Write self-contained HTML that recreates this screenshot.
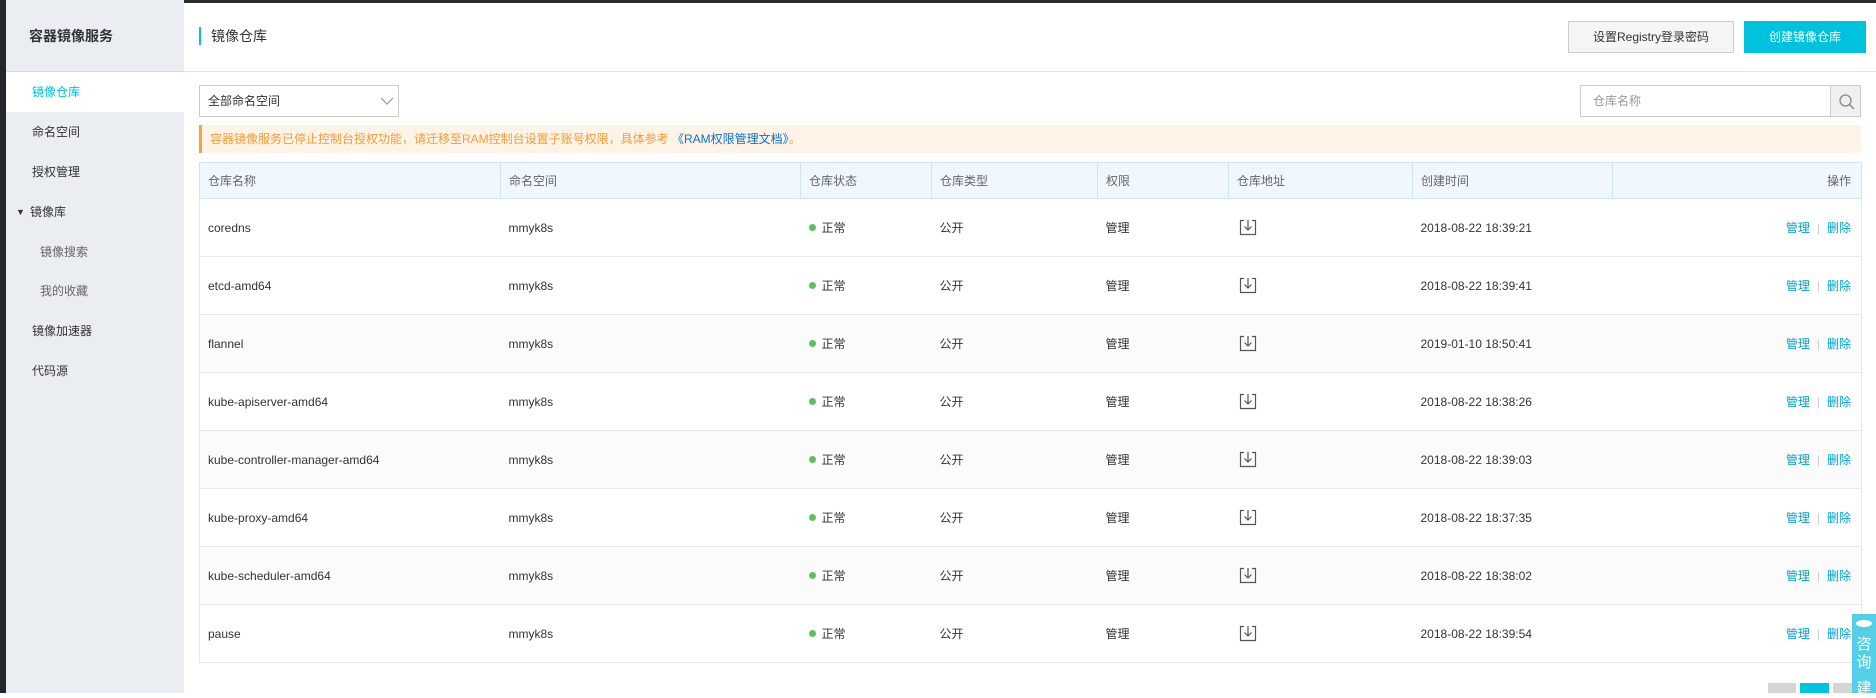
<!DOCTYPE html>
<html><head><meta charset="utf-8"><style>
*{margin:0;padding:0;box-sizing:border-box}
body{width:1876px;height:693px;overflow:hidden;background:#fff;font-family:"Liberation Sans","Noto Sans CJK SC",sans-serif;font-size:12px;color:#333;position:relative}
.a{position:absolute}
.side{left:0;top:0;width:184px;height:693px;background:#eaedf1}
.mi{position:absolute;left:6px;width:178px;height:40px;line-height:40px;padding-left:26px;color:#333}
table{border-collapse:collapse;position:absolute;left:199px;top:162px;width:1662px;table-layout:fixed}
th{height:36px;background:#f0f7fe;border:1px solid #cfe4fa;color:#666;font-weight:normal;text-align:left;padding-left:8px}
td{height:58px;border-bottom:1px solid #e8e8e8;padding-left:8px;white-space:nowrap}
tr.g td{background:#fbfbfb}
td:first-child{border-left:1px solid #e8e8e8}
td:last-child{border-right:1px solid #e8e8e8;text-align:right;padding-right:10px}
th:last-child{text-align:right;padding-right:10px}
.dot{display:inline-block;width:7px;height:7px;border-radius:50%;background:#5cc35c;margin-right:6px;vertical-align:1px}
.lk{color:#00a2ca}
.sep{color:#ccc;margin:0 7px}
</style></head><body>
<div class="a" style="left:0;top:0;width:1876px;height:3px;background:#2b2d30"></div>
<div class="a side"></div>
<div class="a" style="left:0;top:0;width:6px;height:693px;background:#23272b"></div>
<div class="a" style="left:29px;top:26px;font-size:14px;font-weight:bold;color:#333">容器镜像服务</div>
<div class="a" style="left:6px;top:71px;width:178px;height:1px;background:#d6dade"></div>
<div class="mi" style="top:72px;background:#fff;color:#00c1de">镜像仓库</div>
<div class="mi" style="top:112px">命名空间</div>
<div class="mi" style="top:152px">授权管理</div>
<div class="mi" style="top:192px;padding-left:24px"><span style="position:absolute;left:10px;font-size:9px">▼</span>镜像库</div>
<div class="mi" style="top:232px;padding-left:34px;color:#666">镜像搜索</div>
<div class="mi" style="top:271px;padding-left:34px;color:#666">我的收藏</div>
<div class="mi" style="top:311px">镜像加速器</div>
<div class="mi" style="top:351px">代码源</div>

<div class="a" style="left:199px;top:27px;width:2px;height:18px;background:#00c1de"></div>
<div class="a" style="left:211px;top:27px;font-size:14px;line-height:18px">镜像仓库</div>
<div class="a" style="left:1568px;top:21px;width:166px;height:32px;background:#f5f5f5;border:1px solid #ccc;text-align:center;line-height:30px">设置Registry登录密码</div>
<div class="a" style="left:1744px;top:21px;width:122px;height:32px;background:#00c1de;color:#fff;text-align:center;line-height:32px">创建镜像仓库</div>
<div class="a" style="left:184px;top:71px;width:1692px;height:1px;background:#e3e3e3"></div>

<div class="a" style="left:199px;top:85px;width:200px;height:32px;border:1px solid #ccc;line-height:30px;padding-left:8px">全部命名空间
<svg class="a" style="left:180px;top:11px" width="14" height="8"><path d="M1 1L7 7L13 1" fill="none" stroke="#999" stroke-width="1.2"/></svg></div>
<div class="a" style="left:1580px;top:85px;width:281px;height:32px;border:1px solid #ccc;line-height:30px;padding-left:12px;color:#999">仓库名称</div>
<div class="a" style="left:1830px;top:85px;width:31px;height:32px;border:1px solid #ccc;background:#f0f0f0">
<svg class="a" style="left:7px;top:7px" width="18" height="18"><circle cx="7.5" cy="7.5" r="5.5" fill="none" stroke="#888" stroke-width="1.3"/><path d="M11.5 11.5L16 16" stroke="#888" stroke-width="1.5"/></svg></div>

<div class="a" style="left:199px;top:125px;width:1662px;height:28px;background:#fdf3e7;border-left:3px solid #f5a340;line-height:28px;padding-left:8px;color:#f39c38">容器镜像服务已停止控制台授权功能，请迁移至RAM控制台设置子账号权限，具体参考 <span style="color:#0f6fc6">《RAM权限管理文档》</span>。</div>

<table>
<colgroup><col style="width:301px"><col style="width:300px"><col style="width:131px"><col style="width:166px"><col style="width:131px"><col style="width:184px"><col style="width:200px"><col style="width:249px"></colgroup>
<tr><th>仓库名称</th><th>命名空间</th><th>仓库状态</th><th>仓库类型</th><th>权限</th><th>仓库地址</th><th>创建时间</th><th>操作</th></tr>
<tr><td>coredns</td><td>mmyk8s</td><td><span class="dot"></span>正常</td><td>公开</td><td>管理</td><td>ICON</td><td>2018-08-22 18:39:21</td><td><span class="lk">管理</span><span class="sep">|</span><span class="lk">删除</span></td></tr>
<tr><td>etcd-amd64</td><td>mmyk8s</td><td><span class="dot"></span>正常</td><td>公开</td><td>管理</td><td>ICON</td><td>2018-08-22 18:39:41</td><td><span class="lk">管理</span><span class="sep">|</span><span class="lk">删除</span></td></tr>
<tr class="g"><td>flannel</td><td>mmyk8s</td><td><span class="dot"></span>正常</td><td>公开</td><td>管理</td><td>ICON</td><td>2019-01-10 18:50:41</td><td><span class="lk">管理</span><span class="sep">|</span><span class="lk">删除</span></td></tr>
<tr><td>kube-apiserver-amd64</td><td>mmyk8s</td><td><span class="dot"></span>正常</td><td>公开</td><td>管理</td><td>ICON</td><td>2018-08-22 18:38:26</td><td><span class="lk">管理</span><span class="sep">|</span><span class="lk">删除</span></td></tr>
<tr class="g"><td>kube-controller-manager-amd64</td><td>mmyk8s</td><td><span class="dot"></span>正常</td><td>公开</td><td>管理</td><td>ICON</td><td>2018-08-22 18:39:03</td><td><span class="lk">管理</span><span class="sep">|</span><span class="lk">删除</span></td></tr>
<tr><td>kube-proxy-amd64</td><td>mmyk8s</td><td><span class="dot"></span>正常</td><td>公开</td><td>管理</td><td>ICON</td><td>2018-08-22 18:37:35</td><td><span class="lk">管理</span><span class="sep">|</span><span class="lk">删除</span></td></tr>
<tr class="g"><td>kube-scheduler-amd64</td><td>mmyk8s</td><td><span class="dot"></span>正常</td><td>公开</td><td>管理</td><td>ICON</td><td>2018-08-22 18:38:02</td><td><span class="lk">管理</span><span class="sep">|</span><span class="lk">删除</span></td></tr>
<tr><td>pause</td><td>mmyk8s</td><td><span class="dot"></span>正常</td><td>公开</td><td>管理</td><td>ICON</td><td>2018-08-22 18:39:54</td><td><span class="lk">管理</span><span class="sep">|</span><span class="lk">删除</span></td></tr>
</table>
<script>
document.querySelectorAll('td').forEach(function(t){if(t.textContent==='ICON'){t.innerHTML='<svg width="18" height="17" style="vertical-align:middle;margin-left:2px"><path d="M5 1.5H1.5V15.5H16.5V1.5H13" fill="none" stroke="#555" stroke-width="1.2"/><path d="M9 1V11M5.5 7.5L9 11L12.5 7.5" fill="none" stroke="#555" stroke-width="1.2"/></svg>';}});
</script>

<div class="a" style="left:1768px;top:683px;width:28px;height:10px;background:#d5d5d5"></div>
<div class="a" style="left:1800px;top:683px;width:29px;height:10px;background:#00c1de"></div>
<div class="a" style="left:1833px;top:683px;width:20px;height:10px;background:#d5d5d5"></div>
<div class="a" style="left:1852px;top:614px;width:24px;height:79px;background:#55cfe6;color:#fff;font-size:15px;text-align:center;line-height:18px;padding-top:22px">
<div class="a" style="left:4px;top:6px;width:16px;height:7px;border:1.5px solid #fff;border-radius:50%;background:#fff"></div>咨<br>询<br><span style="font-size:8px;line-height:8px;display:block">·</span>建</div>
</body></html>
